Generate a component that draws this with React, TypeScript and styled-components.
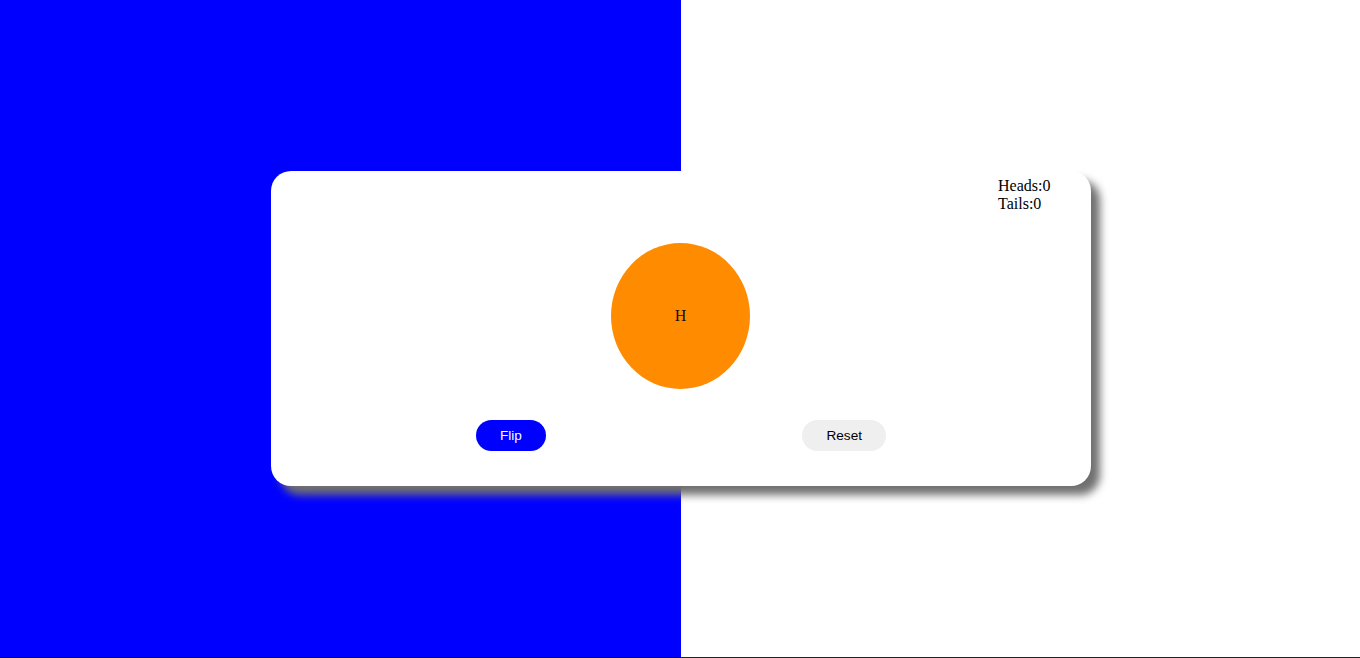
import React, { useState } from "react";
import styled, { createGlobalStyle } from "styled-components";

const Global = createGlobalStyle`
  html, body { margin: 0; padding: 0; }
  body { font-family: "Liberation Serif", "Times New Roman", serif; font-size: 16px; }
`;

const Page = styled.div`
  height: 657px;
  box-sizing: content-box;
  padding-left: 2px;
  border-bottom: 1px solid rgba(0, 0, 0, 0.87);
  background: linear-gradient(to right, #0000ff 681px, #ffffff 681px);
  display: flex;
  align-items: center;
  justify-content: center;
`;

const Card = styled.div`
  position: relative;
  width: 820px;
  height: 315px;
  box-sizing: border-box;
  background: #ffffff;
  border-radius: 20px;
  box-shadow: 9px 9px 9px #707070;
  display: flex;
  flex-direction: column;
  align-items: center;
  padding-top: 72px;
`;

const Score = styled.div`
  position: absolute;
  top: 6px;
  left: 727px;
  font-family: "Liberation Serif", "Times New Roman", serif;
  font-size: 16px;
  line-height: 18px;
  color: #000;
`;

const Coin = styled.div`
  width: 139px;
  height: 146px;
  margin-right: 1px;
  border-radius: 50%;
  background: #ff8c00;
  display: flex;
  align-items: center;
  justify-content: center;
  font-family: "Liberation Serif", "Times New Roman", serif;
  font-size: 16px;
  color: #111;
`;

const Controls = styled.div`
  margin-top: 31px;
  width: 100%;
  box-sizing: border-box;
  padding: 0 205px;
  display: flex;
  justify-content: space-between;
`;

const Button = styled.button<{ $primary?: boolean }>`
  height: 31px;
  padding: 0 24px;
  border: none;
  border-radius: 16px;
  font-family: "Liberation Sans", Arial, sans-serif;
  font-size: 13.6px;
  cursor: pointer;
  background: ${(p) => (p.$primary ? "#0000ff" : "#efefef")};
  color: ${(p) => (p.$primary ? "#ffffff" : "#000000")};
`;

export default function App() {
  const [heads, setHeads] = useState(0);
  const [tails, setTails] = useState(0);
  const [side, setSide] = useState<"H" | "T">("H");

  const flip = () => {
    const h = Math.random() < 0.5;
    setSide(h ? "H" : "T");
    if (h) setHeads((v) => v + 1);
    else setTails((v) => v + 1);
  };
  const reset = () => {
    setHeads(0);
    setTails(0);
    setSide("H");
  };

  return (
    <>
      <Global />
      <Page>
        <Card>
          <Score>
            <div>Heads:{heads}</div>
            <div>Tails:{tails}</div>
          </Score>
          <Coin>{side}</Coin>
          <Controls>
            <Button $primary onClick={flip}>Flip</Button>
            <Button onClick={reset}>Reset</Button>
          </Controls>
        </Card>
      </Page>
    </>
  );
}
